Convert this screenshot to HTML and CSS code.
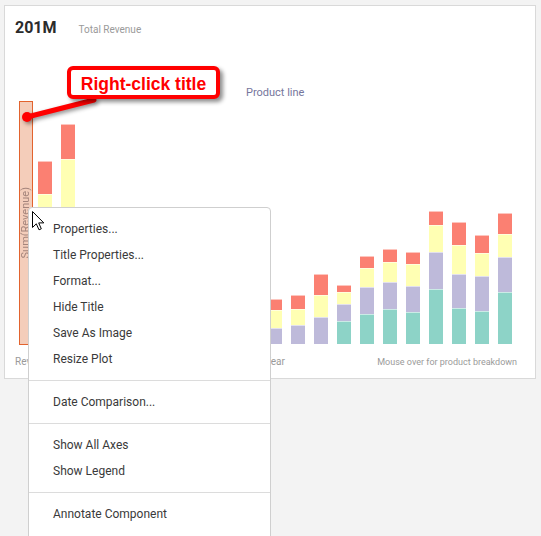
FILE: index.html
```html
<!DOCTYPE html>
<html lang="en">
<head>
<meta charset="utf-8">
<title>Revenue chart</title>
<link rel="stylesheet" href="styles.css">
</head>
<body>
<div class="page">
  <section class="card">
    <header class="card-head">
      <span class="kpi">201M</span>
      <span class="kpi-label">Total Revenue</span>
    </header>
    <div class="legend-title">Product line</div>
    <div class="plot">
      <div class="y-title"><span>Sum(Revenue)</span></div>
      <div class="bars">
        <div class="bar"><i class="s red" style="height:33px"></i><i class="s yel" style="height:56px"></i><i class="s pur" style="height:50px"></i><i class="s teal" style="height:44px"></i></div>
        <div class="bar"><i class="s red" style="height:35px"></i><i class="s yel" style="height:71px"></i><i class="s pur" style="height:60px"></i><i class="s teal" style="height:54px"></i></div>
        <div class="bar"><i class="s red" style="height:20px"></i><i class="s yel" style="height:30px"></i><i class="s pur" style="height:40px"></i><i class="s teal" style="height:30px"></i></div>
        <div class="bar"><i class="s red" style="height:18px"></i><i class="s yel" style="height:26px"></i><i class="s pur" style="height:34px"></i><i class="s teal" style="height:22px"></i></div>
        <div class="bar"><i class="s red" style="height:16px"></i><i class="s yel" style="height:24px"></i><i class="s pur" style="height:30px"></i><i class="s teal" style="height:20px"></i></div>
        <div class="bar"><i class="s red" style="height:15px"></i><i class="s yel" style="height:22px"></i><i class="s pur" style="height:28px"></i><i class="s teal" style="height:15px"></i></div>
        <div class="bar"><i class="s red" style="height:14px"></i><i class="s yel" style="height:20px"></i><i class="s pur" style="height:26px"></i><i class="s teal" style="height:15px"></i></div>
        <div class="bar"><i class="s red" style="height:12px"></i><i class="s yel" style="height:18px"></i><i class="s pur" style="height:22px"></i><i class="s teal" style="height:8px"></i></div>
        <div class="bar"><i class="s red" style="height:12px"></i><i class="s yel" style="height:17px"></i><i class="s pur" style="height:20px"></i><i class="s teal" style="height:6px"></i></div>
        <div class="bar"><i class="s red" style="height:11px"></i><i class="s yel" style="height:16px"></i><i class="s pur" style="height:20px"></i><i class="s teal" style="height:3px"></i></div>
        <div class="bar"><i class="s red" style="height:11px"></i><i class="s yel" style="height:18px"></i><i class="s pur" style="height:16px"></i></div>
        <div class="bar"><i class="s red" style="height:14px"></i><i class="s yel" style="height:16px"></i><i class="s pur" style="height:19px"></i></div>
        <div class="bar"><i class="s red" style="height:21px"></i><i class="s yel" style="height:22px"></i><i class="s pur" style="height:27px"></i></div>
        <div class="bar"><i class="s red" style="height:7px"></i><i class="s yel" style="height:12px"></i><i class="s pur" style="height:17px"></i><i class="s teal" style="height:23px"></i></div>
        <div class="bar"><i class="s red" style="height:12px"></i><i class="s yel" style="height:19px"></i><i class="s pur" style="height:27px"></i><i class="s teal" style="height:30px"></i></div>
        <div class="bar"><i class="s red" style="height:13px"></i><i class="s yel" style="height:20px"></i><i class="s pur" style="height:27px"></i><i class="s teal" style="height:35px"></i></div>
        <div class="bar"><i class="s red" style="height:12px"></i><i class="s yel" style="height:22px"></i><i class="s pur" style="height:26px"></i><i class="s teal" style="height:32px"></i></div>
        <div class="bar"><i class="s red" style="height:14px"></i><i class="s yel" style="height:27px"></i><i class="s pur" style="height:37px"></i><i class="s teal" style="height:55px"></i></div>
        <div class="bar"><i class="s red" style="height:23px"></i><i class="s yel" style="height:29px"></i><i class="s pur" style="height:34px"></i><i class="s teal" style="height:36px"></i></div>
        <div class="bar"><i class="s red" style="height:18px"></i><i class="s yel" style="height:23px"></i><i class="s pur" style="height:35px"></i><i class="s teal" style="height:33px"></i></div>
        <div class="bar"><i class="s red" style="height:21px"></i><i class="s yel" style="height:23px"></i><i class="s pur" style="height:35px"></i><i class="s teal" style="height:52px"></i></div>
      </div>
    </div>
    <footer class="card-foot">
      <span class="foot-left">Revenue</span>
      <span class="foot-axis">Year</span>
      <span class="foot-hint">Mouse over for product breakdown</span>
    </footer>
  </section>

  <svg class="connector" width="110" height="70" viewBox="0 0 110 70" aria-hidden="true">
    <line x1="27" y1="57" x2="94" y2="40" stroke="#ff0000" stroke-width="5" stroke-linecap="round"/>
    <circle cx="27" cy="57" r="5" fill="#ff0000"/>
  </svg>
  <div class="callout">Right-click title</div>

  <nav class="menu">
    <ul class="menu-group">
      <li>Properties...</li>
      <li>Title Properties...</li>
      <li>Format...</li>
      <li>Hide Title</li>
      <li>Save As Image</li>
      <li>Resize Plot</li>
    </ul>
    <ul class="menu-group">
      <li>Date Comparison...</li>
    </ul>
    <ul class="menu-group">
      <li>Show All Axes</li>
      <li>Show Legend</li>
    </ul>
    <ul class="menu-group">
      <li>Annotate Component</li>
    </ul>
  </nav>

  <svg class="cursor" width="14" height="21" viewBox="0 0 14 21" aria-hidden="true">
    <path d="M0.5 0.5 L0.5 16.5 L4.3 12.8 L7 18.8 L9.3 17.8 L6.7 11.9 L11.8 11.9 Z" fill="#ffffff" stroke="#000000" stroke-width="1" stroke-linejoin="miter"/>
  </svg>
</div>
</body>
</html>
```

FILE: styles.css
```css
* { box-sizing: border-box; }

html, body {
  margin: 0;
  padding: 0;
  overflow: hidden;
  background: #f3f3f3;
}

.page {
  position: relative;
  height: 536px;
  overflow: hidden;
  padding: 5px 5px 0 4px;
  font-family: Roboto, "Noto Sans", sans-serif;
}

.card {
  width: 532px;
  background: #ffffff;
  border: 1px solid #d9d9d9;
  padding: 0 23px 10px 10px;
}

.card-head {
  display: flex;
  align-items: baseline;
  margin-top: 12px;
  height: 20px;
  line-height: 20px;
}

.kpi {
  font-size: 16px;
  font-weight: 700;
  color: #2b2b2b;
}

.kpi-label {
  margin-left: 22px;
  font-size: 10px;
  color: #9a9a9a;
}

.legend-title {
  margin: 48px 0 0 231px;
  font-size: 11px;
  line-height: 14px;
  color: #76769c;
}

.plot {
  display: flex;
  margin-top: 1px;
  height: 244px;
}

.y-title {
  margin-left: 4px;
  width: 14px;
  height: 244px;
  background: #f4cdba;
  border: 1px solid #e2632e;
  display: flex;
  align-items: center;
  justify-content: center;
}

.y-title span {
  writing-mode: vertical-rl;
  transform: rotate(180deg);
  font-size: 11px;
  line-height: 12px;
  color: #a5857c;
  white-space: nowrap;
}

.bars {
  display: flex;
  align-items: flex-end;
  gap: 9px;
  margin-left: 5px;
  padding-bottom: 1px;
}

.bar {
  width: 14px;
  display: flex;
  flex-direction: column;
}

.s {
  display: block;
  width: 14px;
  box-shadow: inset 0 1px 0 rgba(255, 255, 255, 0.55);
}

.red { background: #fb8072; }
.yel { background: #ffffb3; }
.pur { background: #bebada; }
.teal { background: #8dd3c7; }

.card-foot {
  display: grid;
  grid-template-columns: 23px 1fr;
  margin-top: 11px;
  font-size: 9px;
  line-height: 12px;
  color: #9a9a9a;
}

.foot-left {
  grid-column: 1;
  grid-row: 1;
  font-size: 10px;
  white-space: nowrap;
}

.foot-axis {
  grid-column: 2;
  grid-row: 1;
  justify-self: center;
  font-size: 10px;
}

.foot-hint {
  grid-column: 2;
  grid-row: 1;
  justify-self: end;
  margin-right: -5px;
  white-space: nowrap;
}

/* annotation overlay */
.connector {
  position: absolute;
  left: 0;
  top: 60px;
  filter: drop-shadow(2px 2px 2px rgba(0, 0, 0, 0.45));
}

.callout {
  position: absolute;
  left: 67px;
  top: 66px;
  width: 153px;
  height: 33px;
  border: 4px solid #ff0000;
  border-radius: 6px;
  background: #ffffff;
  box-shadow: 3px 3px 4px rgba(0, 0, 0, 0.45);
  text-align: center;
  padding-top: 3px;
  font-family: "Liberation Sans", Arial, sans-serif;
  font-weight: 700;
  font-size: 17.5px;
  line-height: 23px;
  color: #ff0000;
  white-space: nowrap;
}

/* context menu */
.menu {
  position: absolute;
  left: 28px;
  top: 207px;
  width: 243px;
  height: 360px;
  background: #ffffff;
  border: 1px solid #cfcfcf;
  border-radius: 4px 4px 0 0;
  font-size: 12px;
  color: #3a3a3a;
}

.menu-group {
  list-style: none;
  margin: 0;
  padding: 8px 0;
}

.menu-group + .menu-group {
  border-top: 1px solid #dcdcdc;
}

.menu-group li {
  height: 26px;
  line-height: 26px;
  padding-left: 24px;
  white-space: nowrap;
}

.cursor {
  position: absolute;
  left: 32px;
  top: 211px;
}
```
